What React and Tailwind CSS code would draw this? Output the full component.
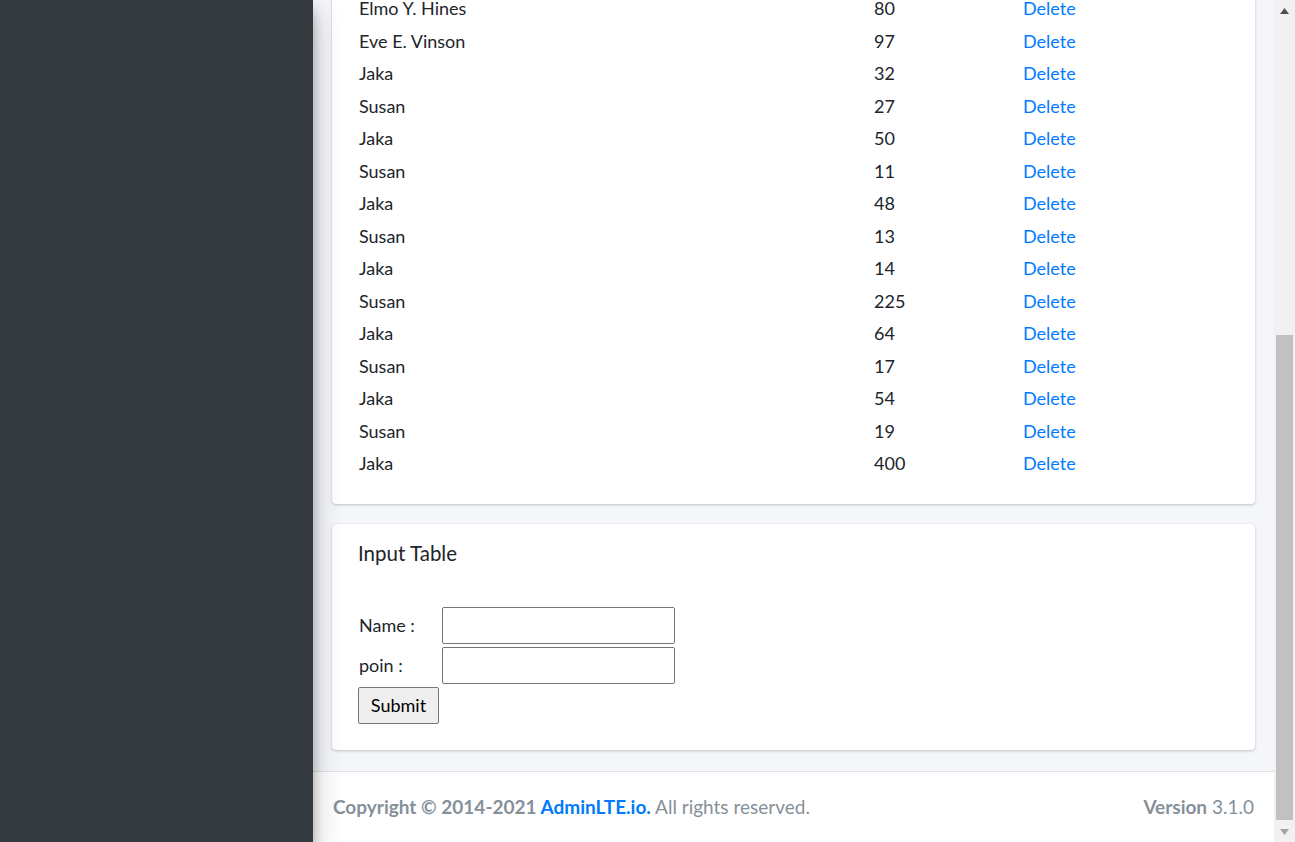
const rows = [
  ['Elmo Y. Hines', 80],
  ['Eve E. Vinson', 97],
  ['Jaka', 32],
  ['Susan', 27],
  ['Jaka', 50],
  ['Susan', 11],
  ['Jaka', 48],
  ['Susan', 13],
  ['Jaka', 14],
  ['Susan', 225],
  ['Jaka', 64],
  ['Susan', 17],
  ['Jaka', 54],
  ['Susan', 19],
  ['Jaka', 400],
];

function Scrollbar() {
  return (
    <div className="w-[21px] h-full bg-[#f1f1f1] flex flex-col shrink-0">
      <div className="h-[21px] flex items-center justify-center">
        <svg width="9" height="6" viewBox="0 0 9 6">
          <path d="M4.5 0 L9 6 L0 6 Z" fill="#505050" />
        </svg>
      </div>
      <div className="flex-1 px-[2px] pt-[314px] pb-[1px]">
        <div className="h-full bg-[#c1c1c1]" />
      </div>
      <div className="h-[21px] flex items-center justify-center">
        <svg width="9" height="6" viewBox="0 0 9 6">
          <path d="M0 0 L9 0 L4.5 6 Z" fill="#a3a3a3" />
        </svg>
      </div>
    </div>
  );
}

export default function App() {
  return (
    <div className="flex h-[842px] w-[1295px] overflow-hidden font-['Lato',sans-serif] text-[18px] text-[#212529]">
      <aside className="w-[313px] shrink-0 bg-[#343a40] relative z-10 shadow-[0_14px_28px_rgba(0,0,0,0.25),0_10px_10px_rgba(0,0,0,0.22)]" />

      <div className="flex-1 flex flex-col bg-[#f4f6f9] min-w-0">
        <main className="flex-1 overflow-hidden px-[19px]">
          <div className="bg-white rounded-[4px] shadow-[0_0_1px_rgba(0,0,0,0.125),0_1px_3px_rgba(0,0,0,0.2)] -mt-[7.5px] pb-[24px] px-[27px]">
            {rows.map(([name, poin], i) => (
              <div key={i} className="grid grid-cols-[515px_149px_1fr] h-[32.5px] items-center">
                <span>{name}</span>
                <span>{poin}</span>
                <a href="#" className="text-[#007bff]">Delete</a>
              </div>
            ))}
          </div>

          <div className="mt-[20px] bg-white rounded-[4px] shadow-[0_0_1px_rgba(0,0,0,0.125),0_1px_3px_rgba(0,0,0,0.2)]">
            <div className="h-[58px] flex items-center px-[26px]">
              <h3 className="text-[20.5px]">Input Table</h3>
            </div>
            <form className="px-[26px] pt-[25px] pb-[26px] flex flex-col gap-[3px]">
              <div className="flex items-center">
                <label className="w-[84px] pl-[1px]">Name :</label>
                <input className="w-[233px] h-[37px] border border-[#767676] rounded-[2px] bg-white" />
              </div>
              <div className="flex items-center">
                <label className="w-[84px] pl-[1px]">poin :</label>
                <input className="w-[233px] h-[37px] border border-[#767676] rounded-[2px] bg-white" />
              </div>
              <div>
                <button type="button" className="w-[81px] h-[37px] border border-[#767676] rounded-[2px] bg-[#efefef] text-black">
                  Submit
                </button>
              </div>
            </form>
          </div>
        </main>

        <footer className="h-[71px] shrink-0 border-t border-[#dee2e6] bg-white px-[20px] flex items-center justify-between text-[19px] text-[#869099]">
          <div>
            <strong>Copyright © 2014-2021 <a href="#" className="text-[#007bff]">AdminLTE.io.</a></strong> All rights reserved.
          </div>
          <div>
            <b>Version</b> 3.1.0
          </div>
        </footer>
      </div>

      <Scrollbar />
    </div>
  );
}
